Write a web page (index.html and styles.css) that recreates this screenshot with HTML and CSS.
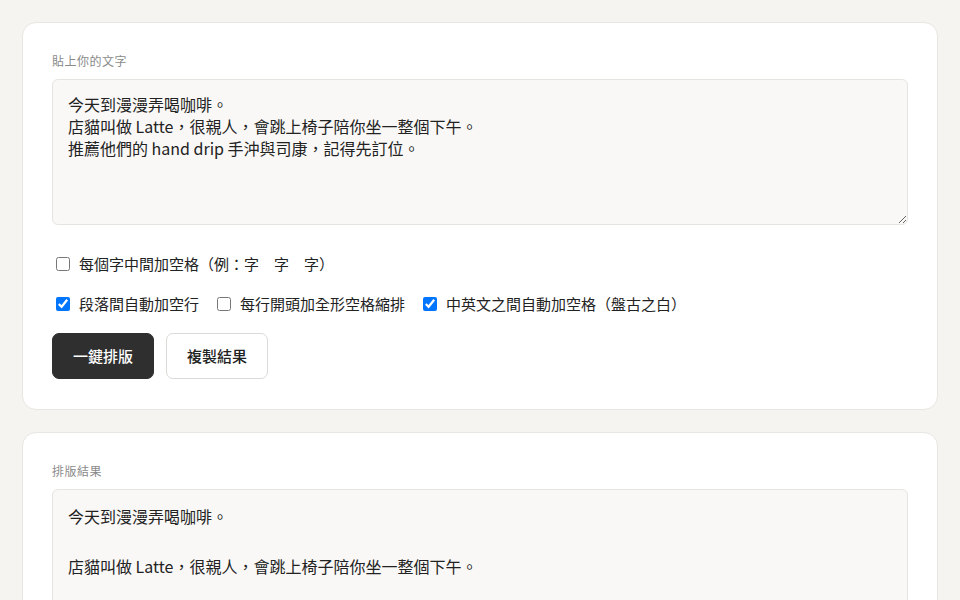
FILE: index.html
```html
<!DOCTYPE html>
<html lang="zh-Hant">
<head>
  <meta charset="UTF-8" />
  <meta name="viewport" content="width=device-width, initial-scale=1.0" />
  <title>中文排版小工具</title>
  <link rel="stylesheet" href="styles.css">
</head>
<body>
  <div class="card">
    <label class="field-label" for="source">貼上你的文字</label>
    <textarea id="source" class="source">今天到漫漫弄喝咖啡。
店貓叫做 Latte，很親人，會跳上椅子陪你坐一整個下午。
推薦他們的 hand drip 手沖與司康，記得先訂位。</textarea>

    <div class="options">
      <label class="option">
        <input type="checkbox" id="spaceChars" />
        <span>每個字中間加空格（例：字　字　字）</span>
      </label>
    </div>
    <div class="options">
      <label class="option">
        <input type="checkbox" id="blankLines" checked />
        <span>段落間自動加空行</span>
      </label>
      <label class="option">
        <input type="checkbox" id="indent" />
        <span>每行開頭加全形空格縮排</span>
      </label>
      <label class="option">
        <input type="checkbox" id="pangu" checked />
        <span>中英文之間自動加空格（盤古之白）</span>
      </label>
    </div>

    <div class="actions">
      <button id="formatBtn" class="btn btn-dark">一鍵排版</button>
      <button id="copyBtn" class="btn">複製結果</button>
    </div>
  </div>

  <div class="card">
    <div class="field-label">排版結果</div>
    <div id="result" class="result"></div>
  </div>

  <script>
    const source = document.getElementById('source');
    const result = document.getElementById('result');
    const spaceChars = document.getElementById('spaceChars');
    const blankLines = document.getElementById('blankLines');
    const indent = document.getElementById('indent');
    const pangu = document.getElementById('pangu');

    function addPangu(line) {
      return line
        .replace(/([\u4e00-\u9fff])([A-Za-z0-9])/g, '$1 $2')
        .replace(/([A-Za-z0-9])([\u4e00-\u9fff])/g, '$1 $2');
    }

    function format() {
      let lines = source.value.split('\n').map(l => l.trim()).filter(l => l);
      if (pangu.checked) lines = lines.map(addPangu);
      if (spaceChars.checked) lines = lines.map(l => l.split('').join('　'));
      if (indent.checked) lines = lines.map(l => '　　' + l);
      result.textContent = lines.join(blankLines.checked ? '\n\n' : '\n');
    }

    document.getElementById('formatBtn').addEventListener('click', format);
    document.getElementById('copyBtn').addEventListener('click', () => {
      navigator.clipboard && navigator.clipboard.writeText(result.textContent);
    });

    format();
  </script>
</body>
</html>
```

FILE: styles.css
```css
* { box-sizing: border-box; }
body {
  margin: 0;
  padding: 22px;
  background: #f5f4f1;
  color: #222;
  font-family: "Noto Sans CJK TC", "Noto Sans", sans-serif;
  font-size: 15px;
}
.card {
  background: #fff;
  border: 1px solid #e8e6e2;
  border-radius: 14px;
  padding: 29px 29px 30px 29px;
  margin-bottom: 22px;
}
.field-label {
  display: block;
  font-size: 12px;
  line-height: 18px;
  color: #8a8a8a;
  letter-spacing: 0.04em;
  margin-bottom: 9px;
}
.source {
  display: block;
  width: 100%;
  height: 146px;
  padding: 13px 15px;
  font-family: inherit;
  font-size: 16px;
  line-height: 22px;
  color: #222;
  background: #f9f8f6;
  border: 1px solid #e6e4e0;
  border-radius: 6px;
  resize: vertical;
  outline: none;
}
.options {
  display: flex;
  gap: 14px;
  margin-top: 27px;
}
.options + .options { margin-top: 16px; }
.option {
  display: flex;
  align-items: center;
  line-height: 24px;
  cursor: pointer;
}
.option input {
  width: 14px;
  height: 14px;
  margin: 0 9px 0 4px;
}
.actions {
  display: flex;
  gap: 12px;
  margin-top: 17px;
}
.btn {
  padding: 11px 20px;
  font-family: inherit;
  font-size: 15px;
  font-weight: 500;
  line-height: 22px;
  color: #222;
  background: #fff;
  border: 1px solid #dcdad6;
  border-radius: 7px;
  cursor: pointer;
}
.btn-dark {
  color: #fff;
  background: #2f2f2f;
  border-color: #2f2f2f;
}
.result {
  min-height: 200px;
  padding: 14px 15px;
  font-size: 16px;
  line-height: 25px;
  white-space: pre-wrap;
  background: #f9f8f6;
  border: 1px solid #e6e4e0;
  border-radius: 6px;
}
```
